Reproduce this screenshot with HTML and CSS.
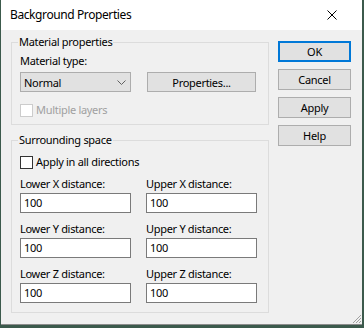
FILE: index.html
```html
<!DOCTYPE html>
<html>
<head>
    <title>Background Properties</title>
    <link rel="stylesheet" href="styles.css">
</head>
<body>
    <div class="window">
        <!-- Title bar -->
        <div class="titlebar">
            <span class="title">Background Properties</span>
            <svg class="close" width="10" height="10" viewBox="0 0 10 10">
                <path d="M0.5 0.5 L9.5 9.5 M9.5 0.5 L0.5 9.5" stroke="#000" stroke-width="1" fill="none"/>
            </svg>
        </div>

        <div class="client">
            <div class="main">
                <!-- Material properties -->
                <fieldset class="group group-material">
                    <legend>Material properties</legend>
                    <div class="label">Material type:</div>
                    <div class="row">
                        <div class="select">
                            <span>Normal</span>
                            <svg class="chevron" width="9" height="5" viewBox="0 0 9 5">
                                <path d="M0.5 0.5 L4.5 4.5 L8.5 0.5" stroke="#606060" stroke-width="1" fill="none"/>
                            </svg>
                        </div>
                        <button class="btn btn-props">Properties...</button>
                    </div>
                    <div class="check disabled"><span class="box"></span>Multiple layers</div>
                </fieldset>

                <!-- Surrounding space -->
                <fieldset class="group group-space">
                    <legend>Surrounding space</legend>
                    <div class="check"><span class="box"></span>Apply in all directions</div>
                    <div class="fields">
                        <div class="field">
                            <div class="label">Lower X distance:</div>
                            <div class="input">100</div>
                        </div>
                        <div class="field">
                            <div class="label">Upper X distance:</div>
                            <div class="input">100</div>
                        </div>
                        <div class="field">
                            <div class="label">Lower Y distance:</div>
                            <div class="input">100</div>
                        </div>
                        <div class="field">
                            <div class="label">Upper Y distance:</div>
                            <div class="input">100</div>
                        </div>
                        <div class="field">
                            <div class="label">Lower Z distance:</div>
                            <div class="input">100</div>
                        </div>
                        <div class="field">
                            <div class="label">Upper Z distance:</div>
                            <div class="input">100</div>
                        </div>
                    </div>
                </fieldset>
            </div>

            <!-- Dialog buttons -->
            <div class="side">
                <button class="btn btn-side btn-default">OK</button>
                <button class="btn btn-side">Cancel</button>
                <button class="btn btn-side">Apply</button>
                <button class="btn btn-side">Help</button>
            </div>

            <svg class="grip" width="12" height="12" viewBox="0 0 12 12">
                <path d="M11 3 L3 11 M11 6 L6 11 M11 9 L9 11" stroke="#a0a0a0" stroke-width="1" fill="none"/>
            </svg>
        </div>
    </div>
</body>
</html>
```

FILE: styles.css
```css
body {
    margin: 0;
    padding: 0;
    width: 364px;
    height: 328px;
    overflow: hidden;
    background: #3c5a4c;
    font-family: "Noto Sans", "Liberation Sans", sans-serif;
    font-size: 11px;
    letter-spacing: -0.3px;
    color: #000;
}

/* Window frame */
.window {
    margin-left: 1px;
    width: 361px;
    height: 325px;
    background: #f0f0f0;
    border-bottom: 1px solid #8c8c8c;
    box-sizing: border-box;
    display: flex;
    flex-direction: column;
}

.titlebar {
    height: 30px;
    background: #fff;
    display: flex;
    align-items: center;
    justify-content: space-between;
    padding-left: 9px;
    padding-right: 25px;
    flex-shrink: 0;
}
.title {
    font-size: 12px;
    letter-spacing: -0.4px;
    line-height: 16px;
    margin-top: -1px;
}
.close {
    display: block;
}

/* Client area */
.client {
    flex: 1;
    position: relative;
    display: flex;
    padding-left: 10px;
}

.main {
    width: 258px;
}

/* Group boxes */
.group {
    margin: 0;
    border: 1px solid #dcdcdc;
    padding: 0 8px;
    min-width: 0;
}
.group legend {
    padding: 0 1px;
    margin-left: -2px;
    line-height: 16px;
}
.group-material {
    margin-top: 4px;
    padding-top: 3px;
    padding-bottom: 6px;
}
.group-space {
    margin-top: 7px;
    padding-top: 6px;
    padding-bottom: 9px;
}

.label {
    line-height: 16px;
}

.row {
    display: flex;
    margin-top: 3px;
}

.select {
    width: 111px;
    height: 20px;
    box-sizing: border-box;
    background: #e1e1e1;
    border: 1px solid #adadad;
    display: flex;
    align-items: center;
    justify-content: space-between;
    padding: 0 4px 0 3px;
}
.chevron {
    display: block;
}

/* Buttons */
.btn {
    font-family: inherit;
    font-size: 11px;
    letter-spacing: -0.3px;
    color: #000;
    background: #e1e1e1;
    border: 1px solid #adadad;
    padding: 0;
    margin: 0;
    box-sizing: border-box;
}
.btn-props {
    width: 109px;
    height: 20px;
    margin-left: 16px;
}

/* Checkboxes */
.check {
    display: flex;
    align-items: center;
    line-height: 16px;
}
.check .box {
    width: 13px;
    height: 13px;
    box-sizing: border-box;
    border: 1px solid #333;
    background: #fff;
    margin-right: 3px;
}
.group-material .check {
    margin-top: 10px;
}
.check.disabled {
    color: #a0a0a0;
}
.check.disabled .box {
    border-color: #cccccc;
}

/* Distance fields */
.fields {
    display: grid;
    grid-template-columns: 111px 111px;
    column-gap: 15px;
    row-gap: 8px;
    margin-top: 6px;
}
.field .label {
    margin-bottom: 1px;
}
.input {
    height: 20px;
    box-sizing: border-box;
    border: 1px solid #7a7a7a;
    background: #fff;
    padding-left: 3px;
    line-height: 18px;
}

/* Side buttons */
.side {
    display: flex;
    flex-direction: column;
    gap: 7px;
    margin-left: 9px;
    padding-top: 11px;
}
.btn-side {
    width: 73px;
    height: 21px;
}
.btn-default {
    border: 2px solid #0078d7;
}

.grip {
    position: absolute;
    right: 0;
    bottom: 0;
}
```
